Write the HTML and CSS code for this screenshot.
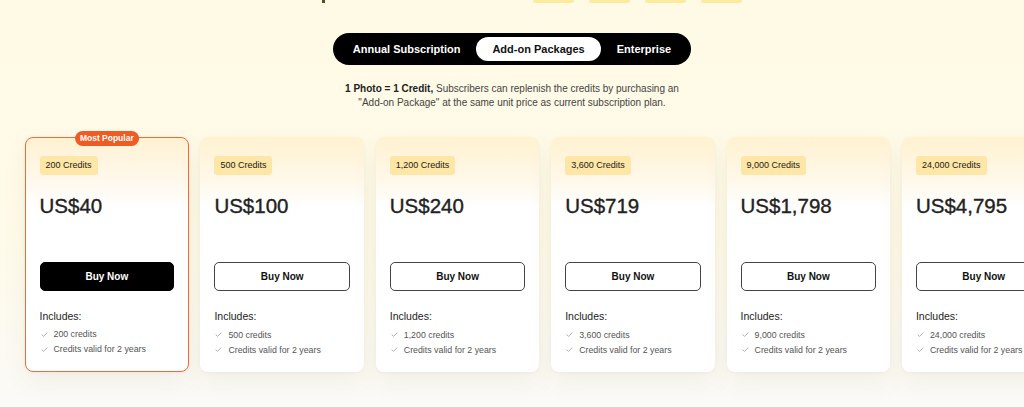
FILE: index.html
```html
<!DOCTYPE html>
<html lang="en">
<head>
  <meta charset="UTF-8">
  <meta name="viewport" content="width=device-width, initial-scale=1.0">
  <title>Pricing - Add-on Packages</title>
  <link rel="stylesheet" href="styles.css">
</head>
<body>

  <!-- bottom edge of the header area that scrolled out of view -->
  <div class="top-edge">
    <span class="top-mark"></span>
    <div class="top-chips">
      <span class="top-chip"></span>
      <span class="top-chip"></span>
      <span class="top-chip"></span>
      <span class="top-chip"></span>
    </div>
  </div>

  <div class="tabs-wrap">
    <div class="tabs">
      <button class="tab">Annual Subscription</button>
      <button class="tab tab-active">Add-on Packages</button>
      <button class="tab">Enterprise</button>
    </div>
  </div>

  <p class="intro">
    <strong>1 Photo = 1 Credit,</strong> Subscribers can replenish the credits by purchasing an<br>
    "Add-on Package" at the same unit price as current subscription plan.
  </p>

  <div class="cards">
    <div class="card card-popular">
      <span class="popular-badge">Most Popular</span>
      <span class="credits-badge">200 Credits</span>
      <div class="price">US$40</div>
      <button class="buy-btn buy-btn-dark">Buy Now</button>
      <div class="includes">Includes:</div>
      <ul class="features">
        <li><svg class="check" viewBox="0 0 8 6"><polyline points="0.6,3.2 2.8,5.2 7.4,0.8"/></svg>200 credits</li>
        <li><svg class="check" viewBox="0 0 8 6"><polyline points="0.6,3.2 2.8,5.2 7.4,0.8"/></svg>Credits valid for 2 years</li>
      </ul>
    </div>

    <div class="card">
      <span class="credits-badge">500 Credits</span>
      <div class="price">US$100</div>
      <button class="buy-btn">Buy Now</button>
      <div class="includes">Includes:</div>
      <ul class="features">
        <li><svg class="check" viewBox="0 0 8 6"><polyline points="0.6,3.2 2.8,5.2 7.4,0.8"/></svg>500 credits</li>
        <li><svg class="check" viewBox="0 0 8 6"><polyline points="0.6,3.2 2.8,5.2 7.4,0.8"/></svg>Credits valid for 2 years</li>
      </ul>
    </div>

    <div class="card">
      <span class="credits-badge">1,200 Credits</span>
      <div class="price">US$240</div>
      <button class="buy-btn">Buy Now</button>
      <div class="includes">Includes:</div>
      <ul class="features">
        <li><svg class="check" viewBox="0 0 8 6"><polyline points="0.6,3.2 2.8,5.2 7.4,0.8"/></svg>1,200 credits</li>
        <li><svg class="check" viewBox="0 0 8 6"><polyline points="0.6,3.2 2.8,5.2 7.4,0.8"/></svg>Credits valid for 2 years</li>
      </ul>
    </div>

    <div class="card">
      <span class="credits-badge">3,600 Credits</span>
      <div class="price">US$719</div>
      <button class="buy-btn">Buy Now</button>
      <div class="includes">Includes:</div>
      <ul class="features">
        <li><svg class="check" viewBox="0 0 8 6"><polyline points="0.6,3.2 2.8,5.2 7.4,0.8"/></svg>3,600 credits</li>
        <li><svg class="check" viewBox="0 0 8 6"><polyline points="0.6,3.2 2.8,5.2 7.4,0.8"/></svg>Credits valid for 2 years</li>
      </ul>
    </div>

    <div class="card">
      <span class="credits-badge">9,000 Credits</span>
      <div class="price">US$1,798</div>
      <button class="buy-btn">Buy Now</button>
      <div class="includes">Includes:</div>
      <ul class="features">
        <li><svg class="check" viewBox="0 0 8 6"><polyline points="0.6,3.2 2.8,5.2 7.4,0.8"/></svg>9,000 credits</li>
        <li><svg class="check" viewBox="0 0 8 6"><polyline points="0.6,3.2 2.8,5.2 7.4,0.8"/></svg>Credits valid for 2 years</li>
      </ul>
    </div>

    <div class="card">
      <span class="credits-badge">24,000 Credits</span>
      <div class="price">US$4,795</div>
      <button class="buy-btn">Buy Now</button>
      <div class="includes">Includes:</div>
      <ul class="features">
        <li><svg class="check" viewBox="0 0 8 6"><polyline points="0.6,3.2 2.8,5.2 7.4,0.8"/></svg>24,000 credits</li>
        <li><svg class="check" viewBox="0 0 8 6"><polyline points="0.6,3.2 2.8,5.2 7.4,0.8"/></svg>Credits valid for 2 years</li>
      </ul>
    </div>
  </div>

</body>
</html>
```

FILE: styles.css
```css
html, body {
  height: 100%;
}

body {
  margin: 0;
  padding: 0;
  font-family: "Liberation Sans", Arial, sans-serif;
  color: #222;
  background: linear-gradient(180deg, #fffae5 0%, #fffbea 60%, #fbfaf5 95%, #fafaf8 100%);
  overflow: hidden;
}

.top-edge {
  display: flex;
  height: 3px;
  padding-left: 322px;
}

.top-mark {
  width: 3px;
  height: 3px;
  background: #5a4a2a;
}

.top-chips {
  display: flex;
  gap: 15px;
  margin-left: 208px;
}

.top-chip {
  width: 41px;
  height: 3px;
  background: #fcea9f;
  border-radius: 0 0 3px 3px;
}

.tabs-wrap {
  display: flex;
  justify-content: center;
  margin-top: 30px;
}

.tabs {
  display: flex;
  padding: 4px;
  background: #000;
  border-radius: 16px;
}

.tab {
  height: 24px;
  padding: 0 16px;
  border: none;
  border-radius: 12px;
  background: transparent;
  color: #fff;
  font-family: inherit;
  font-size: 11px;
  font-weight: bold;
  cursor: pointer;
}

.tab-active {
  background: #fff;
  color: #111;
}

.intro {
  margin: 17px 0 0;
  text-align: center;
  font-size: 10px;
  line-height: 14px;
  color: #444;
}

.intro strong {
  color: #222;
}

.cards {
  display: flex;
  gap: 11.8px;
  padding-left: 25px;
  margin-top: 27px;
}

.card {
  position: relative;
  flex-shrink: 0;
  width: 163.6px;
  height: 235px;
  box-sizing: border-box;
  padding: 17px 14px 0;
  background: linear-gradient(180deg, #fff2d0 0%, #fff8ea 18%, #fff 30%);
  border-radius: 8px;
  box-shadow: 0 10px 24px rgba(120, 100, 60, 0.07), 0 1px 3px rgba(120, 100, 60, 0.06);
}

.card-popular {
  border: 1.5px solid #ef6a3c;
  padding: 15.5px 13.5px 0;
  background: linear-gradient(180deg, #fff2d2 0%, #fff8ec 18%, #fff 30%);
}

.popular-badge {
  position: absolute;
  top: -7px;
  left: 50%;
  transform: translateX(-50%);
  height: 15px;
  padding: 0 5px;
  line-height: 15px;
  border-radius: 8px;
  background: #f15a22;
  color: #fff;
  font-size: 8.5px;
  font-weight: bold;
  white-space: nowrap;
}

.credits-badge {
  display: inline-block;
  height: 19px;
  line-height: 19px;
  padding: 0 6px;
  border-radius: 3px;
  background: #fde6a6;
  color: #222;
  font-size: 9px;
}

.price {
  margin-top: 18px;
  font-size: 20.5px;
  line-height: 26px;
  color: #222;
  -webkit-text-stroke: 0.35px #222;
}

.buy-btn {
  display: block;
  width: 100%;
  height: 29px;
  margin-top: 43px;
  border: 1px solid #444;
  border-radius: 5px;
  background: #fff;
  color: #111;
  font-family: inherit;
  font-size: 10px;
  font-weight: bold;
  cursor: pointer;
}

.buy-btn-dark {
  background: #000;
  border-color: #000;
  color: #fff;
}

.includes {
  margin-top: 18px;
  font-size: 10.5px;
  line-height: 14px;
  color: #222;
}

.features {
  list-style: none;
  margin: 4px 0 0;
  padding: 0;
}

.features li {
  display: flex;
  align-items: center;
  height: 15px;
  font-size: 8.8px;
  color: #555;
}

.check {
  width: 7px;
  height: 5px;
  margin: 0 6px 0 1px;
  fill: none;
  stroke: #aaa;
  stroke-width: 1.1;
}
```
